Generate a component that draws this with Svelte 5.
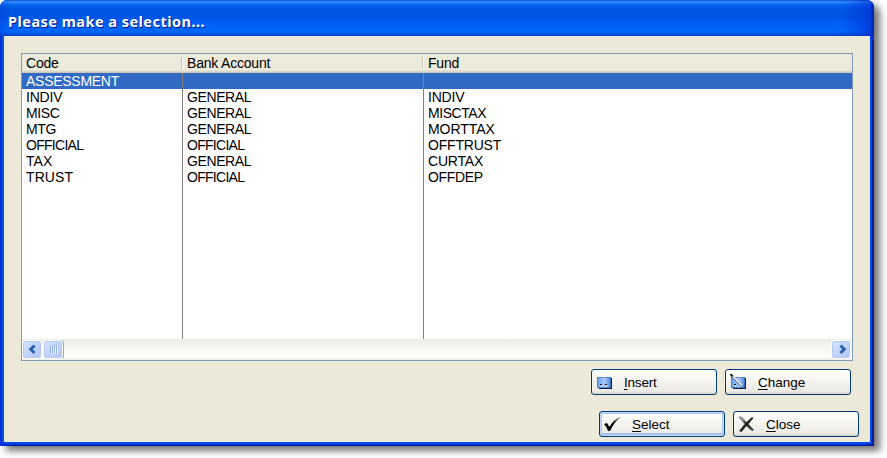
<script>
  const columns = [
    { key: 'code', title: 'Code' },
    { key: 'bank', title: 'Bank Account' },
    { key: 'fund', title: 'Fund' }
  ];
  const rows = [
    { code: 'ASSESSMENT', bank: '', fund: '' },
    { code: 'INDIV', bank: 'GENERAL', fund: 'INDIV' },
    { code: 'MISC', bank: 'GENERAL', fund: 'MISCTAX' },
    { code: 'MTG', bank: 'GENERAL', fund: 'MORTTAX' },
    { code: 'OFFICIAL', bank: 'OFFICIAL', fund: 'OFFTRUST' },
    { code: 'TAX', bank: 'GENERAL', fund: 'CURTAX' },
    { code: 'TRUST', bank: 'OFFICIAL', fund: 'OFFDEP' }
  ];
  // Tracking in px for words whose spacing differs from the default.
  const tracking = { OFFICIAL: -0.72, GENERAL: -0.4, MISC: -0.4, MISCTAX: -0.45, MTG: -0.4, TRUST: 0.1, TAX: 0.1, MORTTAX: -0.05, OFFDEP: -0.35, ASSESSMENT: -0.27 };
  let selected = $state(0);
</script>

{#snippet card(pen)}
  <svg class="icon" width="18" height="16" viewBox="0 0 18 16">
    <path d="M3 4h13v11H3z" fill="#071d4b" />
    <path d="M1 3h14v11H1z" fill="url(#cardFill)" />
    <path d="M1.5 3.5h13v10h-13z" fill="none" stroke="#2458a6" stroke-dasharray="1 1" />
    <path d="M4 10h2v1H4zM9 10h2v1H9z" fill="#111" />
    <path d="M5 11h1v2H5zM10 11h1v2h-1z" fill="#eee" />
    {#if pen}
      <path d="M1 1L12 12" stroke="#44546a" stroke-width="2.4" />
      <path d="M3 2.5L12 11.5" stroke="#fff" stroke-width="1.5" />
      <path d="M0 0h2v1h1v1H1V1H0z" fill="#111" />
    {/if}
    <defs>
      <linearGradient id="cardFill"><stop stop-color="#68a1ee" /><stop offset=".55" stop-color="#a9cafa" /><stop offset="1" stop-color="#4c83d3" /></linearGradient>
    </defs>
  </svg>
{/snippet}

<div class="desktop">
  <section class="window">
    <header class="titlebar"><h1>Please make a selection...</h1></header>
    <main>
      <div class="list">
        <div class="head">
          {#each columns as c}<div class="cell"><span>{c.title}</span></div>{/each}
        </div>
        <div class="body">
          {#each rows as row, i}
            <div class="row" class:selected={i === selected} onclick={() => (selected = i)} role="presentation">
              {#each columns as c}<div class="cell"><span style:letter-spacing="{tracking[row[c.key]] ?? -0.2}px">{row[c.key]}</span></div>{/each}
            </div>
          {/each}
          <div class="row rest">{#each columns as c}<div class="cell"></div>{/each}</div>
        </div>
        <div class="scroll">
          <button class="sb" aria-label="Scroll left"><svg width="17" height="17"><path d="M10.5 4.5L6.7 8.3L10.5 12.1" /></svg></button>
          <div class="sb thumb"><i></i><i></i><i></i><i></i></div>
          <div class="track"></div>
          <button class="sb right" aria-label="Scroll right"><svg width="17" height="17"><path d="M7.5 4.5L11.3 8.3L7.5 12.1" /></svg></button>
        </div>
      </div>
      <div class="actions edit">
        <button class="btn">{@render card(false)}<span class="label tight"><u>I</u>nsert</span></button>
        <button class="btn">{@render card(true)}<span class="label"><u>C</u>hange</span></button>
      </div>
      <div class="actions finish">
        <button class="btn focus">
          <svg class="icon" width="18" height="16" viewBox="0 0 18 16"><path d="M0 8L3 7L5.5 11Q9 4 16 1L17 1Q10 6 6 15L4 15Q3 11 0 8Z" fill="url(#tick)" /><defs><linearGradient id="tick"><stop offset=".5" stop-color="#000" /><stop offset="1" stop-color="#aaa" /></linearGradient></defs></svg>
          <span class="label"><u>S</u>elect</span>
        </button>
        <button class="btn">
          <svg class="icon" width="18" height="16" viewBox="0 0 18 16"><path d="M1 0L4 1L8.5 6L14 1L15.5 2L10.5 8L16 14L15 15L12.5 14L8.5 10L3.5 16L1 15L6.5 8L1 2Z" fill="url(#cross)" /><defs><linearGradient id="cross" y2="1" x2="1"><stop stop-color="#999" /><stop offset=".25" stop-color="#888" /><stop offset=".5" stop-color="#222" /><stop offset="1" stop-color="#555" /></linearGradient></defs></svg>
          <span class="label"><u>C</u>lose</span>
        </button>
      </div>
    </main>
  </section>
</div>

<style>
  :global(body) { background: #fff; overflow: hidden; }
  .desktop { width: 887px; height: 458px; overflow: hidden; font: 14px/16px "Liberation Sans", Arial, sans-serif; color: #000; }
  .window {
    box-sizing: border-box; width: 874px; height: 446px; display: flex; flex-direction: column;
    background: #0831d9; border-radius: 7px 7px 0 0;
    box-shadow: 6px 5px 7px rgba(0, 0, 0, .53);
  }
  .titlebar {
    height: 36px; flex: none; display: flex; align-items: center; padding-left: 8px; border-radius: 7px 7px 0 0;
    background: linear-gradient(90deg, #0030c040 0, transparent 12px, transparent 842px, #0028cc90 870px, #0020a0 874px),
      linear-gradient(#0650d8 0, #3a94ff 2px, #0a6cf4 4px, #0058e6 8px, #0054e3 16px, #0060f8 25px, #0068ff 31px, #005cf0 33px, #0040c8 36px);
  }
  h1 { margin: 5px 0 0; font: bold 14.5px/18px "Noto Sans", "Open Sans", sans-serif; letter-spacing: .47px; color: #fff; text-shadow: 1px 1px 0 #0a1883; white-space: nowrap; }
  main {
    flex: 1; box-sizing: border-box; margin: 0 4px 4px; padding: 17px 17px 0; background: #ece9d8;
    box-shadow: -2px 0 0 #0855dd, 2px 2px 0 #0046e8, -3px 3px 0 #0831d9, 3px 4px 0 #001ca0, 4px 4px 0 #00138c;
    display: flex; flex-direction: column;
  }
  .list { box-sizing: border-box; width: 832px; height: 308px; flex: none; border: 1px solid #7f9db9; background: #fff; display: flex; flex-direction: column; }
  .head, .row { display: flex; }
  .cell { box-sizing: border-box; width: 241px; padding-left: 4px; white-space: nowrap; }
  .cell:first-child { width: 161px; }
  .cell:last-child { width: auto; flex: 1; }
  .head span { letter-spacing: -.2px; }
  .head { height: 19px; box-sizing: border-box; border-bottom: 1px solid #cbc7b8; background: linear-gradient(#ebeadb 16px, #d6d2c2); }
  .head .cell { height: 12px; margin-top: 3px; line-height: 13px; border-right: 1px solid #fff; box-shadow: inset -1px 0 #c7c5b2; }
  .head .cell:last-child { border: 0; box-shadow: none; }
  .body { flex: 1; display: flex; flex-direction: column; }
  .row { height: 16px; }
  .row .cell { border-right: 1px solid #808080; line-height: 17px; }
  .row .cell:last-child { border: 0; }
  .selected { background: #316ac5; color: #fff; }
  .rest { flex: 1; }
  .scroll { height: 21px; box-sizing: border-box; padding: 1px 1px 1px 0; display: flex; gap: 1px; background: linear-gradient(#eeede5, #fefefb 85%, #eeede5); }
  .track { flex: 1; }
  .sb { box-sizing: border-box; width: 20px; height: 19px; padding: 0; border: 1px solid #fff; border-radius: 3px; background: linear-gradient(135deg, #dbe6ff, #c1d3fb 50%, #b4c8f6); box-shadow: inset 0 0 0 1px #b4c8f2; display: flex; align-items: center; justify-content: center; }
  .sb svg { display: block; fill: none; stroke: #225fae; stroke-width: 2.8; }
  .thumb { gap: 1px; box-shadow: inset 0 0 0 1px #b4c8f2, 1px 0 #91a9cf; }
  .thumb i { width: 1px; height: 7px; background: #8caee9; box-shadow: 1px 1px #eef4fe; }
  .actions { display: flex; gap: 8px; }
  .edit { margin: 8px 0 0 570px; }
  .finish { margin: 16px -10px 0 578px; }
  .btn { box-sizing: border-box; flex: none; width: 126px; height: 26px; padding: 0 0 0 4px; display: flex; align-items: center; border: 1px solid #003c74; border-radius: 3px; background: linear-gradient(#fff, #f4f3ee 50%, #ecebe5 88%, #d6d0c5); font: inherit; color: #000; }
  .focus { box-shadow: inset 0 0 0 1px #c3d8fa, inset 0 0 0 2px #b0c8f0, inset 0 -3px #9db9eb; }
  .icon { display: block; flex: none; }
  .label { margin: 2px 0 0 10px; font-size: 13.5px; line-height: 16px; }
  .tight { letter-spacing: -.2px; }
  u { text-underline-offset: 2px; text-decoration-thickness: 1px; }
</style>
